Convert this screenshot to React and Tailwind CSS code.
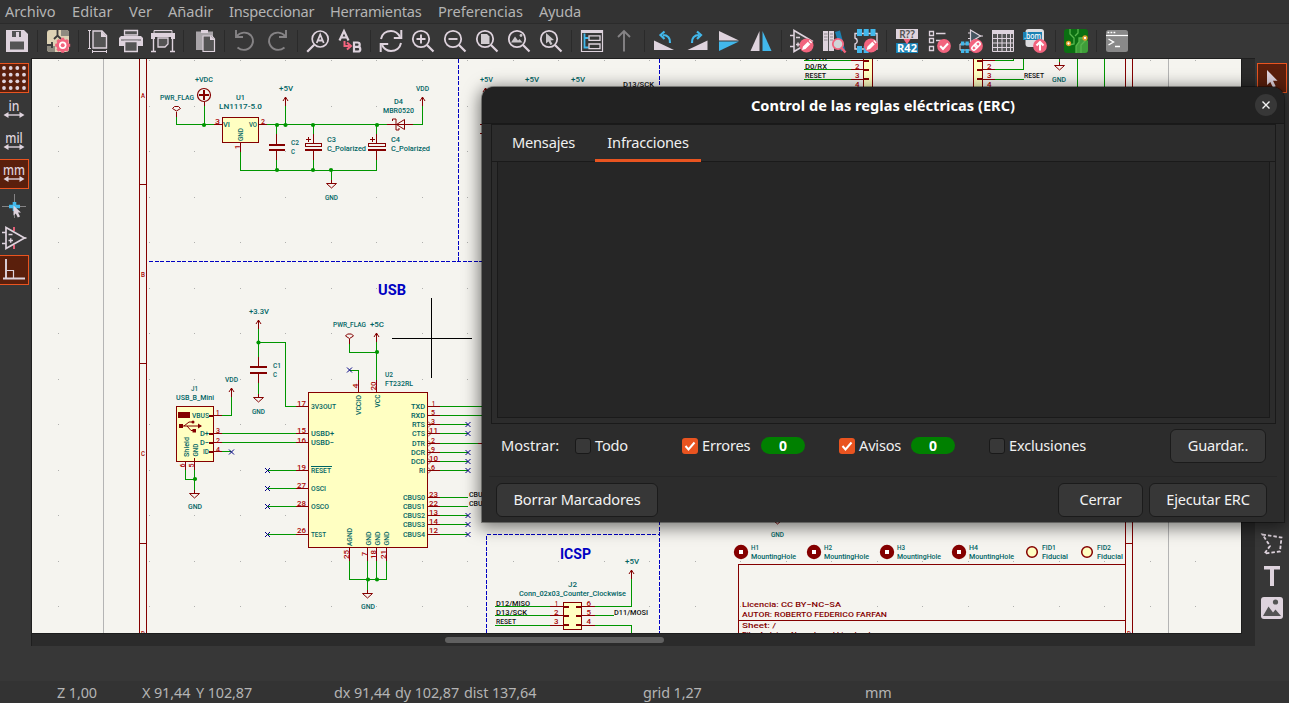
import React from "react";

const L = "#ded3dd";
const P = "#f2647e";
const B = "#42b8eb";
const G = "#545454";

function Icon({ children, size = 24 }) {
  return (
    <svg width={size} height={size} viewBox="0 0 24 24" fill="none" className="block shrink-0 overflow-visible">
      {children}
    </svg>
  );
}

const Lens = ({ children }) => (
  <Icon>
    <circle cx="10" cy="10" r="8.2" stroke={L} strokeWidth="1.8" />
    <path d="M16 16l6.5 6.5" stroke={L} strokeWidth="2.2" />
    {children}
  </Icon>
);

const Pencil = ({ x, y }) => (
  <g transform={`translate(${x} ${y})`}>
    <circle r="7" fill={P} />
    <path d="M-4.500 4.500l1-3.500L1.300-3.800l2.500 2.500L-1 3.500z M2.200-4.500l1-1 2.400 2.400-1 1z" fill="#fff" />
  </g>
);

const groups = [
  [
    <Icon>
      <path d="M1 1h18l4 4v18H1z" fill={L} />
      <path d="M7 2h9v6H7z" fill={G} />
      <path d="M11 3h3v5h-3z" fill={L} />
      <path d="M5 12.500h14v8H5z" fill={G} />
    </Icon>,
  ],
  [
    <Icon>
      <rect x="1" y="1" width="22" height="22" rx="3" fill="#ddd2b4" />
      <path d="M15 1h5a3 3 0 013 3v3h-8zM1 17h8v6H4a3 3 0 01-3-3z" fill="#8f8b80" />
      <path d="M11.500 1v6M8 10l3.500-3.500L15 10M1 16h6M6 13v6" stroke="#3a3a3a" strokeWidth="1.800" />
      <g transform="translate(16.700 16.300)">
        <circle r="4.800" fill="#fff" stroke={P} strokeWidth="3" />
        <path d="M0-7.500v15M-7.500 0h15M-5.300-5.300l10.600 10.600M5.300-5.300L-5.300 5.300" stroke={P} strokeWidth="3" />
        <circle r="3.700" fill="#fff" />
        <circle r="2" fill={P} />
      </g>
    </Icon>,
    ],
  [
    <Icon>
      <path d="M1 1.500h3M1 19.500h3M2.500 1.500v18M5.500 22.500h14.500M5.500 21v3M19.500 21v3" stroke={L} />
      <path d="M6 2h9l4.500 4.500V19H6z" fill={G} stroke={L} strokeWidth="1.400" />
      <path d="M14 1.500V8h6z" fill={L} />
    </Icon>,
    <Icon>
      <path d="M5.500 1.500h13V6h-13z" fill={G} stroke={L} strokeWidth="1.300" />
      <path d="M2 7h20l2 2v8h-5v-4H5v4H0V9z" fill={L} />
      <path d="M2 11h20" stroke={G} />
      <path d="M5.700 12.500h12.600v10H5.700z" fill={G} stroke={L} strokeWidth="1.400" />
    </Icon>,
    <Icon>
      <path d="M3 1.500h18V5H3z" fill={G} stroke={L} />
      <path d="M0 4h24v6h-4V8H4v2H0z" fill={L} />
      <path d="M7 9h10v6l-3 3H7z" fill={G} stroke={L} strokeWidth="1.300" />
      <path d="M2.500 10v12M21.500 10v12M0 22.500h5M19 22.500h5" stroke={L} strokeWidth="1.400" />
    </Icon>,
  ],
  [
    <Icon>
      <path d="M4 2.500h17V21H4z" fill="#a8a4a8" />
      <path d="M9 1h7v3H9z" fill={L} />
      <path d="M11 7h9l2.500 3v12.500H11z" fill={G} stroke={L} strokeWidth="1.200" />
      <path d="M18 6.500V11h5z" fill={L} />
    </Icon>,
  ],
  [
    <Icon>
      <path d="M3 1v7h7M3.500 7.500C7 3 14 2 18 6.500c4 5 1.500 12-4.500 14-3.500 1-6.500 0-9-2" stroke="#858385" strokeWidth="1.900" />
    </Icon>,
    <Icon>
      <path d="M21 1v7h-7M20.500 7.500C17 3 10 2 6 6.500c-4 5-1.500 12 4.500 14 3.500 1 6.500 0 9-2" stroke="#858385" strokeWidth="1.900" />
    </Icon>,
  ],
  [
    <Icon>
      <circle cx="14.200" cy="10" r="8" stroke={L} strokeWidth="1.700" />
      <path d="M8.200 15.800l-7 7" stroke={L} strokeWidth="2.200" />
      <path d="M10.700 14L14.200 5.500l3.500 8.500M12 11.500h4.500" stroke={L} strokeWidth="1.800" />
    </Icon>,
    <Icon>
      <path d="M1.500 11.500L6 2l4.500 9.500M3 8.500h6" stroke={L} strokeWidth="2.200" />
      <path d="M16 13.500h3.500a2.200 2.200 0 010 4.400H16zm0 4.400h4a2.300 2.300 0 010 4.600h-4z" stroke={L} strokeWidth="2.200" />
      <path d="M6.500 12v5H11M9 13.500l4 3.500-4 3.500" stroke={P} strokeWidth="2" />
    </Icon>,
  ],
  [
    <Icon>
      <path d="M2 10C3 5 7 2 12 2c4 0 7 2 9 6M22 14c-1 5-5 8-10 8-4 0-7-2-9-6" stroke={L} strokeWidth="2" />
      <path d="M22.300 1v8h-7.500M1.700 23v-8h7.500" stroke={L} strokeWidth="2" />
    </Icon>,
    <Lens><path d="M5.500 10h9M10 5.500v9" stroke={L} strokeWidth="1.900" /></Lens>,
    <Lens><path d="M5.500 10h9" stroke={L} strokeWidth="1.900" /></Lens>,
    <Lens><path d="M6 5h6l2.500 2.500V15H6z" fill="#d2cdd1" /></Lens>,
    <Lens>
      <path d="M4 13.500l4-6 3 4 1.500-1.500 3 3.500z" fill="#c9c5c9" />
      <circle cx="14" cy="6.500" r="1.400" fill="#c9c5c9" />
    </Lens>,
    <Lens><path d="M7 4v10.500l2.500-2 2 3.500 2-1-2-3.500 3.500-.5z" fill="#c9c5c9" /></Lens>,
  ],
  [
    <Icon>
      <path d="M1.500 1.500h21v21h-21z" stroke={L} strokeWidth="1.200" />
      <path d="M1 1h22v3H1z" fill={L} />
      <path d="M4.500 4.500v14h4M4.500 9h4" stroke={B} strokeWidth="1.800" />
      <path d="M9 6.800h11v4.600H9zM9 15h11v4.600H9z" stroke={L} strokeWidth="1.300" />
    </Icon>,
    <Icon>
      <path d="M12 2.500V22.500M6 8l6-6 6 6" stroke="#858385" strokeWidth="1.900" />
    </Icon>,
  ],
  [
    <Icon>
      <path d="M1 11.500v9.500h20z" fill={L} />
      <path d="M17 14c.5-5-2.500-8-7-8M11.500 2.500L7.500 6l4 4" stroke={B} strokeWidth="2.200" />
    </Icon>,
    <Icon>
      <path d="M22.500 11.500v9.500h-20z" fill={L} />
      <path d="M7 14c-.5-5 2.500-8 7-8M12 2.500L16 6l-4 4" stroke={B} strokeWidth="2.200" />
    </Icon>,
    <Icon>
      <path d="M2 2v9.500h20z" fill={L} />
      <path d="M2 22v-9.500h20z" fill={B} />
    </Icon>,
    <Icon>
      <path d="M1.500 22h9V2z" fill={L} />
      <path d="M22.500 22h-9V2z" fill={B} />
    </Icon>,
  ],
  [
    <Icon>
      <path d="M4 1.500v21L22 12z" fill="#444" stroke={L} strokeWidth="1.600" />
      <path d="M0 6.500h4M0 17.500h4M6 8.500h4M6 15.500h4M8 13.500v4" stroke={L} strokeWidth="1.500" />
      <Pencil x={16.5} y={16.5} />
    </Icon>,
    <Icon>
      <path d="M1 2h5.200v20H1zM7 2h5v20H7z" fill={L} />
      <path d="M2 5h3.500M2 8h3.500M2 11h3.500M8 5h3M8 8h3M8 11h3" stroke="#8c868c" />
      <path d="M13 3l5-1.500 5 19-4 2z" fill="#1a81b3" />
      <circle cx="16" cy="15" r="5.200" fill="#cfd5d8" stroke={P} strokeWidth="1.800" />
      <path d="M19.500 19l4 4.500" stroke={P} strokeWidth="2.500" />
    </Icon>,
    <Icon>
      <path d="M1 4.500V9c3 1 3 5 0 6v5h22V4.500z" stroke={L} strokeWidth="1.400" />
      <path d="M3 0h5v7H3zM9.700 0h5v7h-5zM16.500 0h5v7h-5zM3 17h5v7H3zM9.700 17h5v7h-5z" fill={B} />
      <Pencil x={17} y={16.5} />
    </Icon>,
  ],
  [
    <Icon>
      <path d="M1 0h22v10H1z" fill={L} />
      <text x="12" y="8.700" fontSize="10" fontWeight="600" fill={G} textAnchor="middle" fontFamily="Noto Sans, sans-serif">R??</text>
      <path d="M1 14h22v10H1z" fill="#1a81b3" />
      <text x="12" y="22.600" fontSize="10" fontWeight="700" fill="#fff" textAnchor="middle" textLength="20" lengthAdjust="spacingAndGlyphs" fontFamily="Noto Sans, sans-serif">R42</text>
      <path d="M8.500 10h7L12 15.500z" fill={P} />
    </Icon>,
    <Icon>
      <path d="M2.500 2.500h4v4h-4zM2.500 9.500h4v4h-4zM2.500 17.500h4v4h-4zM9 4.500h9.500M9 11.500h5" stroke={L} strokeWidth="1.300" />
      <circle cx="17" cy="17" r="6.900" fill={P} />
      <path d="M13.200 17l2.800 3 5-5.500" stroke="#fff" strokeWidth="2" />
    </Icon>,
    <Icon>
      <path d="M11.500 1v12l10-6z" fill="#465560" stroke={L} strokeWidth="1.200" />
      <path d="M9 4h2.500M9 9.500h2.500M21 7h3" stroke={L} />
      <path d="M1 15h15v6H1z" stroke={L} />
      <path d="M2 12.500h3.300v4H2zM6.500 12.500h3.300v4H6.500zM2 20h3.300v4H2zM6.500 20h3.300v4H6.500z" fill={B} />
      <circle cx="17" cy="17" r="6.900" fill={P} />
      <g transform="translate(17 17) rotate(-45)" stroke="#fff" strokeWidth="1.500">
        <rect x="-5" y="-2" width="6" height="4" rx="2" />
        <rect x="-1" y="-2" width="6" height="4" rx="2" />
      </g>
    </Icon>,
    <Icon>
      <path d="M1.500 1.500h21v21h-21z" fill={G} stroke={L} />
      <path d="M1 1h22v4H1z" fill={L} />
      <path d="M1.500 9.500h21M1.500 14h21M1.500 18.500h21M6.500 4v18.500M11 4v18.500M15.500 4v18.500M19.500 4v18.500" stroke={L} />
    </Icon>,
    <Icon>
      <rect x="2.500" y="0" width="18.500" height="18" rx="3" fill="#dddde0" />
      <path d="M0 3h19v8H0z" fill="#1a81b3" />
      <text x="9.500" y="9.500" fontSize="8" fontWeight="500" fill="#fff" textAnchor="middle" textLength="17" lengthAdjust="spacingAndGlyphs" fontFamily="Noto Sans, sans-serif">.bom</text>
      <circle cx="17" cy="17" r="6.900" fill={P} />
      <path d="M17 21.500v-8M13.500 16.500l3.500-3.500 3.500 3.500" stroke="#fff" strokeWidth="2" />
    </Icon>,
  ],
  [
    <Icon>
      <rect x="0" y="0" width="24" height="24" rx="3" fill="#0b6f12" />
      <path d="M12 24v-7l3-3.500V9l4-1 5 4v9a3 3 0 01-3 3z" fill="#3f9e3a" />
      <path d="M6 0v5l4 4v6l-5 1M14 0v4l-3 3M12 24v-7l3-4V9h6M17 24v-8l5-5" stroke="#57b64d" strokeWidth="1.300" />
      <circle cx="4.500" cy="14.500" r="1.900" fill="#fff" stroke="#e09b2a" strokeWidth="1.500" />
      <circle cx="21" cy="9" r="1.900" fill="#fff" stroke="#e09b2a" strokeWidth="1.500" />
    </Icon>,
  ],
  [
    <Icon>
      <rect x="1" y="1" width="22" height="22" rx="2.500" fill="#898989" />
      <path d="M1 6.500h22" stroke="#fff" strokeWidth="1.200" />
      <path d="M2.500 3.500h8" stroke="#fff" strokeWidth="1.500" strokeDasharray="1.800 1.200" />
      <path d="M3.500 10l5 3-5 3M10 17.500h5" stroke="#fff" strokeWidth="1.400" />
    </Icon>,
  ],
];

const Unit = ({ t, w }) => (
  <Icon>
    <text x="12" y="13" fontSize="13.500" fontWeight="500" fill={L} textAnchor="middle" textLength={w} lengthAdjust="spacingAndGlyphs" fontFamily="Noto Sans, sans-serif">{t}</text>
    <path d="M3 17h18" stroke={L} strokeWidth="1.400" />
    <path d="M1.500 17l5-3v6zM22.500 17l-5-3v6z" fill={L} />
  </Icon>
);

const leftTools = [
  { on: true, i: <Icon>{[2, 8.700, 15.300, 22].map((y) => [2, 8.700, 15.300, 22].map((x) => <circle key={x + "-" + y} cx={x} cy={y} r="1.900" fill={L} />))}</Icon> },
  { i: <Unit t="in" w={11} /> },
  { i: <Unit t="mil" w={17.5} /> },
  { on: true, i: <Unit t="mm" w={22} /> },
  {
    i: (
      <Icon>
        <path d="M0 12.500h24M12.500 0v24" stroke="#858385" />
        <path d="M7 12.500h11M12.500 8v9" stroke={B} strokeWidth="3.600" />
        <path d="M11.500 11.500v10l2.300-2 2 4 2.200-1-2-4h3z" fill={L} />
      </Icon>
    ),
  },
  {
    i: (
      <Icon>
        <path d="M12 1v4M12 19v4" stroke={P} strokeWidth="1.800" />
        <path d="M4 1.500v21L22.500 12z" stroke={L} strokeWidth="1.700" />
        <path d="M0 6.500h4M0 17.500h4M22 12h2.500M6.500 8.500h4M6.500 14.500h4.500M8.700 12.300v4.500" stroke={L} strokeWidth="1.500" />
      </Icon>
    ),
  },
  {
    on: true,
    i: (
      <Icon>
        <path d="M4 1v20.500M1 20.500h22" stroke={L} strokeWidth="1.900" />
        <path d="M4.500 12.500h7v7.500" stroke={L} strokeWidth="1.200" />
      </Icon>
    ),
  },
];

/* ---- schematic helpers ---- */
const TEAL = "#006464";
const RED = "#840000";
const NUM = "#a90000";
const WIRE = "#009600";
const BODY = "#ffffc2";
const NAVY = "#0000c2";

const Wire = ({ d, c = WIRE, w = 1, fill = "none" }) => (
  <path d={d} stroke={c} strokeWidth={w} fill={fill} shapeRendering="crispEdges" />
);
const T = ({ a, b, y, s, c = TEAL, size = 8, weight = 500 }) => (
  <text x={a} y={y + size * 0.36} fill={c} fontSize={size} fontWeight={weight} textLength={b - a} lengthAdjust="spacingAndGlyphs">{s}</text>
);
const V = ({ x, y, len, s, c = TEAL }) => (
  <text transform={`translate(${x + 2.9} ${y + len / 2}) rotate(-90)`} fill={c} fontSize="8" fontWeight="500" textLength={len} lengthAdjust="spacingAndGlyphs">{s}</text>
);
const Dot = ({ x, y }) => <circle cx={x} cy={y} r="2.100" fill={WIRE} />;
const NC = ({ x, y }) => <path d={`M${x - 2.5} ${y - 2.5}l5 5m0-5l-5 5`} stroke="#000084" fill="none" />;
const Up = ({ x, y, h = 9 }) => (
  <g stroke={RED} fill="none">
    <path d={`M${x - 2.5} ${y + 4}L${x} ${y}L${x + 2.5} ${y + 4}`} />
    <Wire d={`M${x} ${y}v${h}`} c={RED} />
  </g>
);
const Gnd = ({ x, y }) => (
  <g stroke={RED} fill="none">
    <Wire d={`M${x} ${y - 4}v4`} c={RED} />
    <path d={`M${x - 5} ${y}h10l-5 4.500z`} />
  </g>
);
const Flag = ({ x, y }) => (
  <g>
    <path d={`M${x - 4} ${y}l2-2h4l2 2l-4 2.500z`} stroke={RED} fill="none" />
    <Wire d={`M${x} ${y + 3}v5`} c={RED} />
  </g>
);

const labels = [
  [195, 213, 79.5, "+VDC"], [160, 194, 97.3, "PWR_FLAG"], [236, 245, 97.3, "U1"], [219, 262, 106, "LN1117-5.0"],
  [279, 293, 88, "+5V"], [416, 429, 88, "VDD"], [394, 403, 101.500, "D4"], [383, 414, 110.500, "MBR0520"],
  [223, 230, 124.500, "VI"], [249, 257, 124.500, "VO"],
  [291, 299, 142.500, "C2"], [291, 295, 151.500, "C"], [327, 336, 139.500, "C3"], [327, 366, 148.500, "C_Polarized"],
  [391, 400, 139.500, "C4"], [391, 430, 148.500, "C_Polarized"], [325, 338, 197, "GND"],
  [249, 269, 311, "+3.3V"], [333, 366, 324.500, "PWR_FLAG"], [370, 384, 324.500, "+5C"], [385, 393, 374.500, "U2"],
  [385, 413, 383.500, "FT232RL"], [225, 238, 379, "VDD"], [191, 198, 388, "J1"], [176, 214, 397.500, "USB_B_Mini"],
  [273, 281, 365.500, "C1"], [273, 277, 374.500, "C"], [252, 265, 411, "GND"], [192, 209, 415.500, "VBUS"],
  [200, 209, 433.500, "D+"], [200, 209, 442.500, "D−"], [203, 209, 451.500, "ID"],
  [311, 336, 406.500, "3V3OUT"], [311, 334, 433.500, "USBD+"], [311, 334, 442.500, "USBD−"],
  [411, 425, 406.500, "TXD"], [411, 425, 415.500, "RXD"], [412, 425, 424.500, "RTS"], [412, 425, 433.500, "CTS"],
  [412, 425, 443, "DTR"], [411, 425, 452, "DCR"], [411, 425, 461, "DCD"], [419, 425, 470, "RI"],
  [403, 425, 497.500, "CBUS0"], [403, 425, 506.500, "CBUS1"], [403, 425, 515.500, "CBUS2"], [403, 425, 524.500, "CBUS3"], [403, 425, 534, "CBUS4"],
  [311, 331, 470.500, "RESET"], [311, 326, 488.500, "OSCI"], [311, 329, 506.500, "OSCO"], [311, 326, 534, "TEST"],
  [188, 202, 506.500, "GND"], [361, 375, 606.500, "GND"],
  [480, 493, 79, "+5V"], [525, 539, 79, "+5V"], [571, 585, 79, "+5V"], [1052, 1066, 79, "GND"],
  [625, 639, 561.500, "+5V"], [568, 577, 584, "J2"], [519, 626, 593.500, "Conn_02x03_Counter_Clockwise"], [771, 784, 534, "GND"],
  [751, 759, 547.500, "H1"], [824, 832, 547.500, "H2"], [897, 905, 547.500, "H3"], [969, 978, 547.500, "H4"],
  [751, 796, 556.500, "MountingHole"], [824, 869, 556.500, "MountingHole"], [897, 941, 556.500, "MountingHole"], [969, 1014, 556.500, "MountingHole"],
  [1042, 1056, 547.500, "FID1"], [1042, 1068, 556.500, "Fiducial"], [1097, 1111, 547.500, "FID2"], [1097, 1123, 556.500, "Fiducial"],
];

const numbers = [
  [215, 220, 121, "3"], [261, 265, 121, "2"], [216, 219.500, 412.500, "1"], [216, 220, 430.500, "3"], [216, 220, 440, "2"], [216, 220, 449, "4"],
  [297, 306, 403.500, "17"], [297, 306, 430.500, "15"], [297, 306, 440, "16"], [297, 306, 467.500, "19"], [297, 306, 485, "27"], [297, 306, 503.500, "28"], [297, 306, 530.500, "26"],
  [432, 435, 403.500, "1"], [431, 435, 412.500, "5"], [431, 435, 421.500, "3"], [429, 438, 430.500, "11"], [431, 435, 440.500, "2"], [431, 435, 449, "9"], [429, 438, 458, "10"], [431, 435, 467.500, "6"],
  [429, 438, 494, "23"], [429, 438, 503, "22"], [429, 438, 512, "13"], [429, 438, 521, "14"], [429, 438, 530.500, "12"],
  [555, 558, 603.500, "1"], [554, 558.500, 612.500, "2"], [554, 558.500, 621.500, "3"], [586.500, 591, 603.500, "6"], [586.500, 591, 612.500, "5"], [586.500, 591, 621.500, "4"],
  [855, 859.500, 66.500, "2"], [855, 859.500, 75.500, "3"], [855, 859.500, 84.500, "4"], [987, 991.500, 66.500, "2"], [987, 991.500, 75.500, "3"], [987, 991.500, 84.500, "4"],
  [141, 145, 95, "A"], [141, 145, 274, "B"], [141, 145, 453.500, "C"], [141, 145, 633, "D"], [1127, 1131, 633, "D"],
];

const nets = [
  [469, 491, 494, "CBUS0"], [469, 491, 503, "CBUS1"], [623, 654, 84.500, "D13/SCK"], [805, 827, 57.500, "D1/TX"], [805, 827, 66.500, "D0/RX"], [805, 826, 75.500, "RESET"],
  [1024, 1044, 75.500, "RESET"], [496, 530, 603, "D12/MISO"], [496, 527, 612, "D13/SCK"], [496, 516, 621.500, "RESET"], [614, 648, 612, "D11/MOSI"],
];

function Schematic() {
  const dots = [];
  for (let i = 0; i < 26; i++) for (let j = 0; j < 13; j++) dots.push([Math.round(58 + i * 45.48), Math.round(60 + j * 45.5)]);
  return (
    <svg width="1209" height="574" viewBox="32 59 1209 574" className="block bg-[#f5f4ef]" fontFamily="Roboto, Noto Sans, sans-serif">
      {dots.map(([x, y], i) => <rect key={i} x={x} y={y} width="1" height="1" fill="#b0b0ae" />)}
      <Wire d="M103.500 59V633M1168.500 59V633" c="#b4b4b4" />
      <Wire d="M139.500 59V633M146.500 59V633M1125.500 59V633M1132.500 59V633M139 184.500h7M139 363.500h7M139 543.500h7M1126 543.500h7M738.500 633V564.500H1125M738 620.500H1125" c={RED} />
      <g strokeDasharray="4 1.500">
        <Wire d="M458.500 59V261M149 261.500H486M659.500 59V633M486.500 633V534.500H660" c={NAVY} />
      </g>

      <rect x="222.500" y="117.500" width="36" height="25" fill={BODY} stroke={RED} shapeRendering="crispEdges" />
      <rect x="308.500" y="392.500" width="119" height="155" fill={BODY} stroke={RED} shapeRendering="crispEdges" />
      <rect x="176.500" y="406.500" width="37" height="55" fill={BODY} stroke={RED} shapeRendering="crispEdges" />
      <rect x="563.500" y="602.500" width="18" height="27" fill={BODY} stroke={RED} shapeRendering="crispEdges" />
      <rect x="863.500" y="50.500" width="9" height="45" fill={BODY} stroke={RED} shapeRendering="crispEdges" />
      <rect x="973.500" y="50.500" width="9" height="45" fill={BODY} stroke={RED} shapeRendering="crispEdges" />

      <Wire d="M176.500 115V124.500H214M204.500 106V124M267 124.500H387M413 124.500H422.500V106M285.500 106V124M276.500 124V134M313.500 124V134M376.500 124V134M276.500 160V170M313.500 160V170M376.500 160V170.500H240.500V152M331.500 170V180" />
      <Wire d="M214 124.500h8M259 124.500h8M387 124.500h26M204.500 102v4M240.500 143v9M276.500 134v10M276.500 151v9M313.500 134v9M313.500 151v9M376.500 134v9M376.500 151v9" c={RED} />
      <Wire d="M269 145h16M269 150h16M305 150h17M368 150h18" c={RED} w={2} />
      <Wire d="M305.500 143.500h16v3h-16zM368.500 143.500h17v3h-17zM306 139.500h5M308.500 137v5M370 139.500h5M372.500 137v5" c={RED} />
      <path d="M404.500 119.500v10l-8-5zM392.500 121v-2h3.500v11h3v-2" stroke={RED} fill="none" />
      <circle cx="204" cy="95" r="6.500" stroke={RED} fill="none" strokeWidth="1.200" />
      <Wire d="M199 95h10M204 90v10" c={RED} w={2} />
      {[[204, 125], [277, 125], [285.500, 125], [313, 125], [377, 125], [277, 170], [313, 170], [331, 170], [258.500, 342.500], [377, 352], [195, 479], [368, 579.500], [377, 579.500]].map(([x, y]) => <Dot key={x + "," + y} x={x} y={y} />)}
      <Up x={285.5} y={97} /><Up x={422.5} y={97} /><Up x={258.5} y={320} /><Up x={231.5} y={388} /><Up x={376.5} y={333} /><Up x={631.5} y={570} /><Up x={485.5} y={88} />
      <Gnd x={331.5} y={183.5} /><Gnd x={258.5} y={397.5} /><Gnd x={194.5} y={493.5} /><Gnd x={367.5} y={593.5} /><Gnd x={1059.5} y={65.5} /><Gnd x={777.5} y={519.5} />
      <Flag x={176.5} y={108.5} /><Flag x={349.5} y={336} />

      <Wire d="M258.500 329V357M258 342.500H285.500V406.500H296M258.500 383V394M231.500 397V415.500H222M222 433.500H296M222 442.500H296M222 451.500H231M349.500 344V352.500H376M376.500 342V380M350 370.500H358.500V380M185.500 470V479.500H194M194.500 470V490M349.500 561V579.500H386.500V561M367.500 561V590M376.500 561V579" />
      <Wire d="M258.500 357v9M258.500 374v9M296 406.500h12M296 433.500h12M296 442.500h12M210 415.500h12M210 433.500h12M210 442.500h12M210 451.500h12M358.500 380v12M376.500 380v12M185.500 462v8M194.500 458v12M349.500 548v13M367.500 548v13M376.500 548v13M386.500 548v13" c={RED} />
      <Wire d="M250 367h17M250 373h17" c={RED} w={2} />
      {[406.500, 415.500, 424.500, 433.500, 443.500, 452.500, 461.500, 470.500, 497.500, 506.500, 515.500, 524.500, 534.500].map((y, i) => (
        <g key={y}>
          <Wire d={`M428 ${y}h12`} c={RED} />
          <Wire d={`M440 ${y}H${i < 2 || i === 4 ? 484 : 468}`} />
          {![0, 1, 4, 8, 9].includes(i) && <NC x={468} y={y} />}
          {i > 1 && i < 8 && <path d={`M428 ${y - 3}l3 3-3 3`} stroke={RED} fill="none" strokeWidth=".7" />}
        </g>
      ))}
      {[470.500, 488.500, 506.500, 534.500].map((y) => (
        <g key={y}>
          <Wire d={`M268 ${y}h28`} /><Wire d={`M296 ${y}h12`} c={RED} /><NC x={267.5} y={y} />
        </g>
      ))}
      <NC x={349.5} y={370} /><NC x={231.500} y={452} />
      <Wire d="M311 466.500h21" c={TEAL} />
      <path d="M178 412h12v6h-12z" fill={RED} />
      <path d="M181 426h20M184 426l5-4h4M187 426l4 4.500h3" stroke={RED} fill="none" />
      <path d="M179 424h4v4h-4zM198 423.500l4 2.500-4 2.500zM192.500 429h3.500v3.500h-3.500z" fill={RED} />
      <circle cx="193" cy="422" r="1.500" fill={RED} />
      <Wire d="M209 416h5M209 434h5M209 443h5M209 452h5M563 607h6M563 616h6M563 625h6M576 607h5M576 616h5M576 625h5M863 61h6M863 70h6M863 79h6M977 61h5M977 70h5M977 79h5" c={RED} w={2} />

      <Wire d="M495 606.500h55M495 615.500h55M495 625.500h55M595 606.500H631.500V579M595 615.500H614M595 625.500H631.500V633M804 60.500h47M804 69.500h47M804 79.500h47M995 60.500H1013.500V59M995 69.500H1023.500V59M995 79.500H1024M1059.500 59v3M1077.500 59V100M1104.500 59V100" />
      <Wire d="M550 606.500h13M550 615.500h13M550 625.500h13M582 606.500h13M582 615.500h13M582 625.500h13M851 60.500h12M851 69.500h12M851 79.500h12M983 60.500h12M983 69.500h12M983 79.500h12M478 443.500h6M480 124.500h4M480 133.500h4M482.500 165v19" c={RED} />

      {labels.map(([a, b, y, s], i) => <T key={i} a={a} b={b} y={y} s={s} />)}
      {numbers.map(([a, b, y, s], i) => <T key={i} a={a} b={b} y={y} s={s} c={NUM} />)}
      {nets.map(([a, b, y, s], i) => <T key={i} a={a} b={b} y={y} s={s} c="#0f0f0f" />)}
      <V x={240} y={134.5} len={13} s="GND" />
      <V x={186} y={447} len={20} s="Shield" />
      <V x={195} y={450} len={13} s="GND" />
      <V x={358.500} y={405} len={20} s="VCCIO" />
      <V x={377} y={401} len={13} s="VCC" />
      <V x={349.500} y={537} len={18} s="AGND" />
      <V x={368} y={538.500} len={14} s="GND" /><V x={377} y={538.500} len={14} s="GND" /><V x={386} y={538.500} len={14} s="GND" />
      <V x={237.500} y={147} len={4} s="1" c={NUM} />
      <V x={182.500} y={465.500} len={4} s="6" c={NUM} /><V x={191.500} y={465.500} len={4} s="5" c={NUM} />
      <V x={355.500} y={386} len={5} s="4" c={NUM} /><V x={373.500} y={386} len={9} s="20" c={NUM} />
      <V x={346} y={554.500} len={9} s="25" c={NUM} /><V x={364.500} y={554} len={4} s="7" c={NUM} />
      <V x={373.500} y={554.500} len={9} s="18" c={NUM} /><V x={383} y={554.500} len={9} s="21" c={NUM} />

      <T a={378} b={406} y={289.5} s="USB" c={NAVY} size={14.5} weight={700} />
      <T a={560} b={591} y={553.5} s="ICSP" c={NAVY} size={14.5} weight={700} />
      <T a={742} b={841} y={604} s="Licencia: CC BY−NC−SA" c={RED} />
      <T a={742} b={887} y={614.5} s="AUTOR: ROBERTO FEDERICO FARFAN" c={RED} />
      <T a={742} b={776} y={625.5} s="Sheet: /" c={RED} />
      <T a={742} b={873} y={634.3} s="File: Arduino_Nano_board.kicad_sch" c={RED} />

      {[741, 814, 887, 959].map((x) => (
        <g key={x}>
          <circle cx={x} cy="552" r="7.200" fill={RED} />
          <rect x={x - 2} y="550" width="4" height="4" fill="#fff" />
        </g>
      ))}
      {[1032, 1087].map((x) => <circle key={x} cx={x} cy="552" r="5.300" fill={BODY} stroke={RED} strokeWidth="1.500" />)}
      <Wire d="M431.500 298V378M392 338.500H472" c="#000" />
    </svg>
  );
}

/* ---- dialog ---- */
const btn = "flex h-[34px] items-center justify-center rounded-[6px] border border-[#1b1b1b] bg-[#373737] pb-px text-[14.6px] text-[#f2f2f2]";

const Check = ({ on }) => (
  <span className={on ? "flex size-4 items-center justify-center rounded-[3px] bg-[#e95420]" : "block size-4 rounded-[3px] border border-[#191919] bg-[#383838]"}>
    {on && (
      <svg width="12" height="12" viewBox="0 0 12 12" fill="none"><path d="M1.500 6l3 3.500 6-7" stroke="#fff" strokeWidth="2" /></svg>
    )}
  </span>
);

function Option({ on, label, count, box }) {
  return (
    <div className={`flex items-center ${box}`}>
      <Check on={on} />
      <span className="ml-1 whitespace-nowrap pb-px">{label}</span>
      {count !== undefined && (
        <span className="ml-auto flex h-[17px] w-[44px] items-center justify-center rounded-full bg-[#008000] pb-px text-[14px] font-bold text-white">{count}</span>
      )}
    </div>
  );
}

function ErcDialog() {
  return (
    <div className="absolute left-[482px] top-[87px] flex h-[435px] w-[802px] flex-col rounded-t-[12px] bg-[#2c2c2c] text-[14.6px] tracking-[-0.2px] text-[#f0f0f0] shadow-[0_3px_16px_3px_rgba(0,0,0,0.5),0_0_0_1px_rgba(0,0,0,0.35)]">
      <div className="flex h-[37px] shrink-0 items-center rounded-t-[12px] border-b border-[#191919] bg-[#222222] pl-[29px] pr-[7px]">
        <h1 className="flex-1 pt-px text-center text-[14.6px] font-bold tracking-[0.03px] text-white">Control de las reglas eléctricas (ERC)</h1>
        <span className="flex size-[22px] items-center justify-center rounded-full bg-[#373737]">
          <svg width="10" height="10" viewBox="0 0 10 10"><path d="M1.500 1.500l7 7m0-7l-7 7" stroke="#f5f5f5" strokeWidth="1.400" /></svg>
        </span>
      </div>
      <div className="ml-[9px] flex h-[300px] w-[785px] shrink-0 flex-col border border-[#1a1a1a]">
        <div className="flex h-[37px] shrink-0 border-b border-[#1a1a1a]">
          <div className="flex w-[103px] items-center justify-center">Mensajes</div>
          <div className="-mb-px flex w-[106px] items-center justify-center border-b-[3px] border-[#e95420] pt-[2px]">Infracciones</div>
        </div>
        <div className="ml-[5px] h-[256px] w-[773px] border border-t-0 border-[#1a1a1a] bg-[#262626]" />
      </div>
      <div className="flex h-[44px] shrink-0 items-center pl-[19px]">
        <span className="w-[74px] pb-px tracking-[0px]">Mostrar:</span>
        <Option label="Todo" box="w-[107px]" />
        <Option on label="Errores" count="0" box="w-[123px] mr-[34px]" />
        <Option on label="Avisos" count="0" box="w-[116px] mr-[34px]" />
        <Option label="Exclusiones" box="w-[181px]" />
        <button className={`${btn} w-[96px]`}>Guardar..</button>
      </div>
      <div className="mx-[7px] mt-[8px] h-px bg-[#262626]" />
      <div className="flex pl-[14px] pt-[6px]">
        <button className={`${btn} w-[162px] tracking-[-0.12px]`}>Borrar Marcadores</button>
        <button className={`${btn} ml-[400px] w-[85px]`}>Cerrar</button>
        <button className={`${btn} ml-[6px] w-[118px]`}>Ejecutar ERC</button>
      </div>
    </div>
  );
}

const menu = [
  ["Archivo", "w-[67px] tracking-[-0.1px]"], ["Editar", "w-[57px] tracking-[0.05px]"], ["Ver", "w-[39px] tracking-[0.2px]"], ["Añadir", "w-[61px] tracking-[0px]"],
  ["Inspeccionar", "w-[101px]"], ["Herramientas", "w-[108px]"], ["Preferencias", "w-[101px] tracking-[0px]"], ["Ayuda", "w-[60px]"],
];

export default function App() {
  return (
    <div className="relative flex h-[703px] w-[1289px] flex-col overflow-hidden bg-[#373737] font-['Noto_Sans',sans-serif] text-[#b4b4b4]">
      <nav className="flex h-6 shrink-0 items-center border-b border-[#2b2b2b] bg-[#333333] pl-[5px] text-[14.6px] tracking-[-0.22px]">
        {menu.map(([m, w]) => <span key={m} className={`${w} shrink-0 whitespace-nowrap`}>{m}</span>)}
      </nav>
      <div className="flex h-[34px] shrink-0 items-center pl-px">
        {groups.map((g, i) => (
          <React.Fragment key={i}>
            {i > 0 && <span className="mx-1 h-[22px] w-px shrink-0 bg-[#2a2a2a]" />}
            {g.map((icon, j) => <span key={j} className="flex w-8 shrink-0 justify-center">{icon}</span>)}
          </React.Fragment>
        ))}
      </div>
      <div className="flex h-[588px] shrink-0">
        <aside className="flex w-[31px] shrink-0 flex-col gap-[2px] pt-[5px]">
          {leftTools.map((t, i) => (
            <span key={i} className={`-ml-px flex size-[30px] items-center justify-center border ${t.on ? "border-[#e95420] bg-[#5a1f0c]" : "border-transparent"}`}>{t.i}</span>
          ))}
        </aside>
        <main className="flex w-[1224px] shrink-0 flex-col border-l border-t border-[#1f1f1f] bg-[#2b2b2b]">
          <div className="w-[1210px] border-b border-r border-[#1d1d1d]"><Schematic /></div>
          <div className="flex h-[12px] items-center pl-[413px]">
            <div className="h-[6px] w-[219px] rounded-full bg-[#606060]" />
          </div>
        </main>
        <aside className="flex w-[34px] shrink-0 flex-col items-center gap-[2px] pt-[5px]">
          <span className="flex size-[30px] items-center justify-center border border-[#e95420] bg-[#5a1f0c]">
            <Icon><path d="M7 4v15l3.300-3 2.700 5.500 2.700-1.300-2.700-5.500h4.500z" fill={L} /></Icon>
          </span>
          <span className="h-[432px]" />
          <span className="flex size-[30px] items-center justify-center">
            <Icon><path d="M2.500 2.500l19 3-1.500 14-15.500 2L10 14z" stroke={L} strokeWidth="1.800" strokeDasharray="3.500 2" /></Icon>
          </span>
          <span className="flex size-[30px] items-center justify-center">
            <Icon><path d="M4 2h16v3.500h-6V22h-4V5.500H4z" fill={L} /></Icon>
          </span>
          <span className="flex size-[30px] items-center justify-center">
            <Icon>
              <rect x="1" y="1" width="22" height="22" rx="3" fill={L} />
              <path d="M3 20l5.500-9.500 4.500 6 2.500-3L21 20z" fill={G} />
              <circle cx="15.500" cy="6" r="2.600" fill={G} />
            </Icon>
          </span>
        </aside>
      </div>
      <div className="h-[35px] shrink-0" />
      <footer className="flex h-[22px] shrink-0 items-center whitespace-pre bg-[#333333] pl-[57px] pt-px text-[14.4px] tracking-[-0.1px]">
        <span className="w-[85px]">Z 1,00</span>
        <span className="w-[54px]">X 91,44</span>
        <span className="w-[138px]">Y 102,87</span>
        <span className="w-[61px]">dx 91,44</span>
        <span className="w-[69px]">dy 102,87</span>
        <span className="w-[179px]">dist 137,64</span>
        <span className="w-[222px]">grid 1,27</span>
        <span>mm</span>
      </footer>
      <ErcDialog />
    </div>
  );
}
